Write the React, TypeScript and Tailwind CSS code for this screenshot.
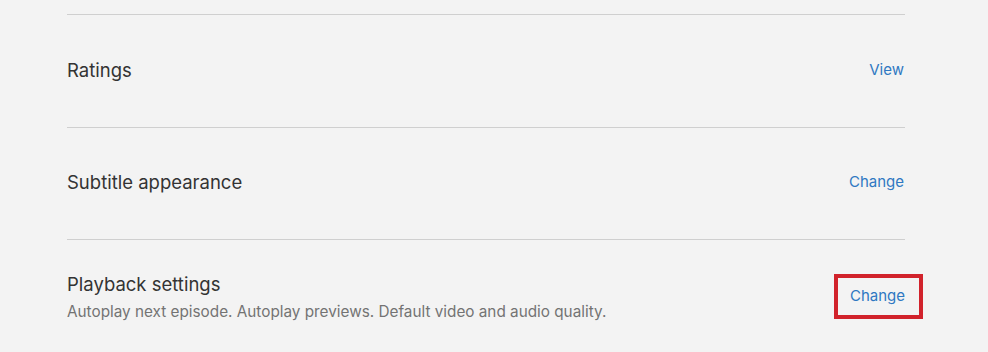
export default function App() {
  const font = { fontFamily: 'Inter, "Liberation Sans", Arial, sans-serif' };
  return (
    <div className="w-[988px] h-[352px] bg-[#f3f3f3] overflow-hidden" style={font}>
      <div className="ml-[67px] w-[838px] pt-[14px]">
        <div className="border-t border-[#cfcfcf] h-[113px] pr-px flex items-center justify-between">
          <span className="text-[18.5px] text-[#333] leading-[24px] mt-[-3px]">Ratings</span>
          <a className="text-[15px] text-[#2f78c2] leading-[20px] mt-[-3px]">View</a>
        </div>
        <div className="border-t border-[#cfcfcf] h-[112px] pr-px flex items-center justify-between">
          <span className="text-[18.5px] text-[#333] leading-[24px] mt-[-4px]">Subtitle appearance</span>
          <a className="text-[15px] text-[#2f78c2] leading-[20px] mt-[-4px]">Change</a>
        </div>
        <div className="border-t border-[#cfcfcf] pt-[32px] pr-px flex items-start justify-between">
          <div className="flex flex-col">
            <span className="text-[18.5px] text-[#333] leading-[24px]">Playback settings</span>
            <span className="text-[15.3px] text-[#737373] leading-[20px] mt-[6px]">
              Autoplay next episode. Autoplay previews. Default video and audio quality.
            </span>
          </div>
          <a className="mt-[2px] -mr-[19px] border-4 border-[#d1222b] pl-3 pr-[14px] pt-[8px] pb-[9px] text-[15px] text-[#2f78c2] leading-[20px]">
            Change
          </a>
        </div>
      </div>
    </div>
  );
}
